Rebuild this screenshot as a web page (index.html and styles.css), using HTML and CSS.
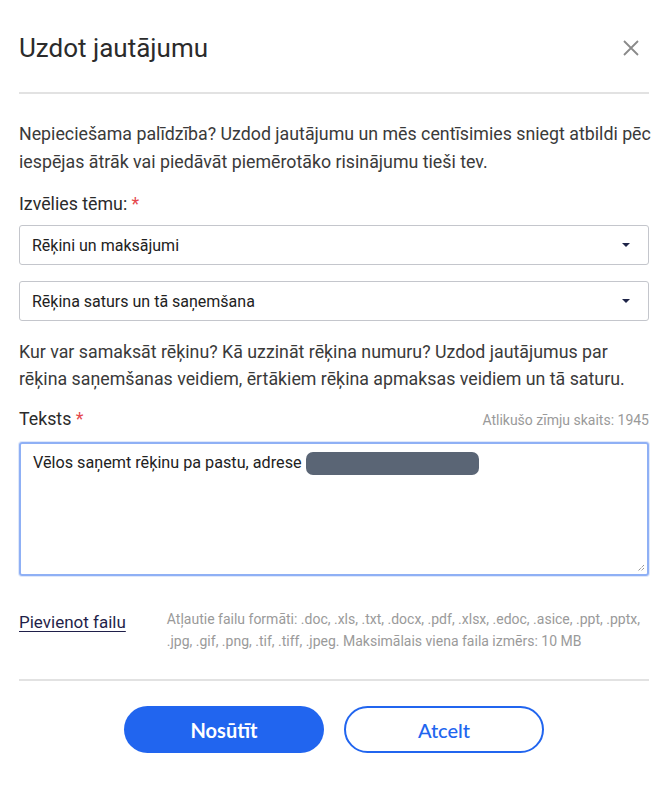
FILE: index.html
```html
<!DOCTYPE html>
<html lang="lv">
<head>
<meta charset="utf-8">
<link rel="stylesheet" href="styles.css">
</head>
<body>
<div class="modal">
  <header class="head">
    <h1 class="title">Uzdot jautājumu</h1>
    <button class="close" aria-label="Aizvērt">
      <svg width="18" height="18" viewBox="0 0 18 18"><path d="M2 2L16 16M16 2L2 16" stroke="#8a8a8a" stroke-width="1.8" fill="none"/></svg>
    </button>
  </header>
  <div class="divider"></div>
  <p class="intro">Nepieciešama palīdzība? Uzdod jautājumu un mēs centīsimies sniegt atbildi pēc iespējas ātrāk vai piedāvāt piemērotāko risinājumu tieši tev.</p>
  <div class="label topic">Izvēlies tēmu: <span class="req">*</span></div>
  <div class="select first"><span>Rēķini un maksājumi</span><span class="caret"></span></div>
  <div class="select"><span>Rēķina saturs un tā saņemšana</span><span class="caret"></span></div>
  <p class="desc">Kur var samaksāt rēķinu? Kā uzzināt rēķina numuru? Uzdod jautājumus par rēķina saņemšanas veidiem, ērtākiem rēķina apmaksas veidiem un tā saturu.</p>
  <div class="textrow">
    <div class="label">Teksts <span class="req">*</span></div>
    <div class="count">Atlikušo zīmju skaits: 1945</div>
  </div>
  <div class="textarea">
    <span>Vēlos saņemt rēķinu pa pastu, adrese</span><span class="redact"></span>
    <svg class="grip" width="9" height="9" viewBox="0 0 9 9"><path d="M8 2L2 8M8 5L5 8" stroke="#666" stroke-width="1" stroke-dasharray="1 1" fill="none"/></svg>
  </div>
  <div class="files">
    <a class="attach" href="#">Pievienot failu</a>
    <p class="formats">Atļautie failu formāti: .doc, .xls, .txt, .docx, .pdf, .xlsx, .edoc, .asice, .ppt, .pptx, .jpg, .gif, .png, .tif, .tiff, .jpeg. Maksimālais viena faila izmērs: 10 MB</p>
  </div>
  <div class="divider"></div>
  <div class="actions">
    <button class="btn primary">Nosūtīt</button>
    <button class="btn secondary">Atcelt</button>
  </div>
</div>
</body>
</html>
```
FILE: styles.css
```css
* { box-sizing: border-box; }
html, body { margin: 0; padding: 0; background: #fff; }
body { font-family: Roboto, "Liberation Sans", sans-serif; color: #333; }
.modal { width: 630px; margin-left: 19px; }
.head { display: flex; align-items: center; justify-content: space-between; height: 92px; padding-top: 4px; }
.title { margin: 0; font-size: 26px; font-weight: 400; color: #2b2b2b; }
.close { border: 0; background: none; padding: 0; margin-right: 9px; display: flex; cursor: pointer; }
.divider { height: 2px; background: #e2e2e2; }
.intro { margin: 26px -20px 0 0; font-size: 17.8px; line-height: 28px; color: #3a3a3a; }
.label { font-size: 17.8px; line-height: 24px; color: #2b2b2b; }
.topic { margin-top: 16px; }
.req { color: #e5484d; }
.select { display: flex; align-items: center; justify-content: space-between; height: 40px; margin-top: 16px; padding: 0 18px 0 12px; border: 1px solid #c4c6cc; border-radius: 3px; font-size: 16px; color: #222; }
.select.first { margin-top: 9px; }
.caret { width: 0; height: 0; border-left: 4px solid transparent; border-right: 4px solid transparent; border-top: 4px solid #1e2448; }
.desc { margin: 17px 0 0; font-size: 17.8px; line-height: 27px; color: #3a3a3a; }
.textrow { display: flex; justify-content: space-between; align-items: baseline; margin-top: 15px; }
.count { font-size: 14px; color: #9a9a9a; }
.textarea { position: relative; height: 134px; margin-top: 11px; padding: 8px 12px; border: 2px solid #8fb0f5; border-radius: 3px; box-shadow: 0 0 0 1px #dfe8fb; font-size: 16.2px; line-height: 22px; color: #222; }
.redact { display: inline-block; vertical-align: top; width: 173px; height: 23px; margin-left: 4px; background: #5a6575; border-radius: 7px; }
.grip { position: absolute; right: 2px; bottom: 2px; }
.files { display: flex; gap: 41px; margin-top: 32px; padding-bottom: 27px; }
.attach { flex: none; margin-top: 3px; font-size: 17px; color: #1f1f4a; text-decoration: underline; text-underline-offset: 3px; line-height: 22px; height: 22px; }
.formats { margin: 0; font-size: 14px; line-height: 22px; color: #9a9a9a; }
.actions { display: flex; justify-content: center; gap: 20px; margin-top: 25px; }
.btn { width: 200px; height: 47px; border-radius: 24px; font-family: Lato, "Open Sans", sans-serif; font-size: 20px; cursor: pointer; }
.primary { background: #2165ef; border: 0; color: #fff; font-weight: 700; }
.secondary { background: #fff; border: 2px solid #2165ef; color: #2165ef; font-weight: 500; }
```
